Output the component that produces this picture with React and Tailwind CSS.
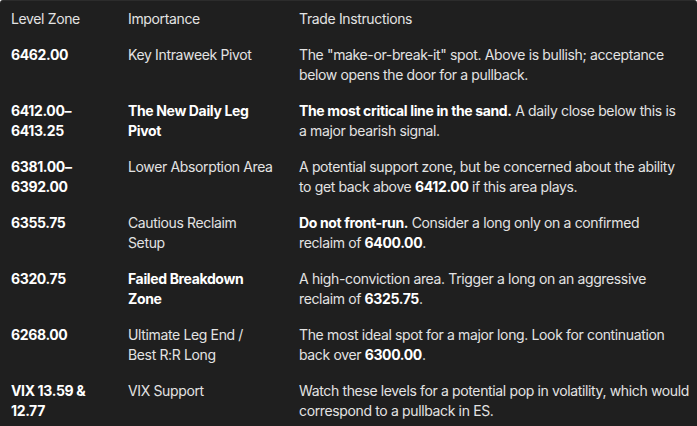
const rows = [
  {
    level: '6462.00',
    importance: 'Key Intraweek Pivot',
    strongImportance: false,
    text: [{ t: 'The "make-or-break-it" spot. Above is bullish; acceptance below opens the door for a pullback.' }],
  },
  {
    level: '6412.00–\n6413.25',
    importance: 'The New Daily Leg Pivot',
    strongImportance: true,
    text: [{ t: 'The most critical line in the sand.', b: true }, { t: ' A daily close below this is a major bearish signal.' }],
  },
  {
    level: '6381.00–\n6392.00',
    importance: 'Lower Absorption Area',
    strongImportance: false,
    text: [
      { t: 'A potential support zone, but be concerned about the ability to get back above ' },
      { t: '6412.00', b: true },
      { t: ' if this area plays.' },
    ],
  },
  {
    level: '6355.75',
    importance: 'Cautious Reclaim\nSetup',
    strongImportance: false,
    text: [
      { t: 'Do not front-run.', b: true },
      { t: ' Consider a long only on a confirmed reclaim of ' },
      { t: '6400.00', b: true },
      { t: '.' },
    ],
  },
  {
    level: '6320.75',
    importance: 'Failed Breakdown Zone',
    strongImportance: true,
    text: [
      { t: 'A high-conviction area. Trigger a long on an aggressive reclaim of ' },
      { t: '6325.75', b: true },
      { t: '.' },
    ],
  },
  {
    level: '6268.00',
    importance: 'Ultimate Leg End /\nBest R:R Long',
    strongImportance: false,
    text: [
      { t: 'The most ideal spot for a major long. Look for continuation back over ' },
      { t: '6300.00', b: true },
      { t: '.' },
    ],
  },
  {
    level: 'VIX 13.59 &\n12.77',
    importance: 'VIX Support',
    strongImportance: false,
    wide: true,
    text: [{ t: 'Watch these levels for a potential pop in volatility, which would correspond to a pullback in ES.' }],
  },
];

export default function App() {
  return (
    <div
      className="w-[697px] h-[426px] overflow-hidden bg-[#1f1f1f] border-t border-[#2c2c2c] rounded-t-[3px] text-[14px] leading-5 tracking-[-0.36px] text-[#e3e3e3]"
      style={{ fontFamily: 'Inter, "Noto Sans", sans-serif' }}
    >
      <div className="grid grid-cols-[117px_171px_1fr]">
        <div className="px-[11px] py-2">Level Zone</div>
        <div className="px-[11px] py-2">Importance</div>
        <div className="px-[11px] py-2">Trade Instructions</div>
        {rows.map((row) => (
          <div key={row.level} className="contents">
            <div className="px-[11px] py-2 font-bold text-white whitespace-pre-line">{row.level}</div>
            <div
              className={
                row.strongImportance
                  ? 'px-[11px] py-2 font-bold text-white whitespace-pre-line'
                  : 'px-[11px] py-2 whitespace-pre-line'
              }
            >
              {row.importance}
            </div>
            <div className={row.wide ? 'pl-[11px] pr-0 py-2' : 'px-[11px] py-2'}>
              {row.text.map((part, i) =>
                part.b ? (
                  <b key={i} className="font-bold text-white">{part.t}</b>
                ) : (
                  <span key={i}>{part.t}</span>
                )
              )}
            </div>
          </div>
        ))}
      </div>
    </div>
  );
}
